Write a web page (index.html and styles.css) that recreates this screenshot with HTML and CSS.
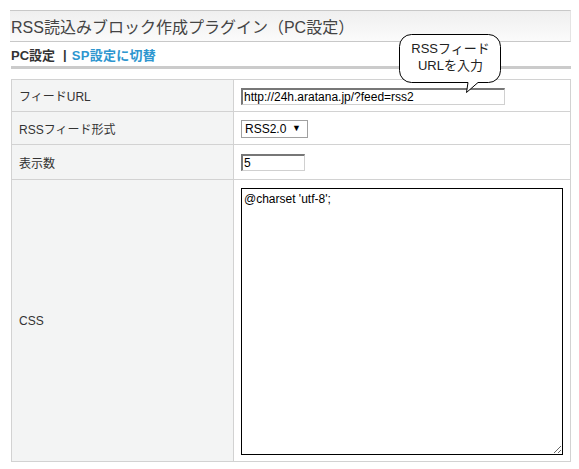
FILE: index.html
```html
<!DOCTYPE html>
<html lang="ja">
<head>
<meta charset="utf-8">
<title>RSS読込みブロック作成プラグイン</title>
<link rel="stylesheet" href="styles.css">
</head>
<body>
<div class="page">
  <div class="header"><h1 class="title">RSS読込みブロック作成プラグイン（PC設定）</h1></div>
  <div class="tabs"><span class="tab-current">PC設定</span><span class="sep">|</span><a class="tab-link" href="#">SP設定に切替</a></div>
  <div class="rule"></div>
  <table class="form">
    <tr class="row-url">
      <th>フィードURL</th>
      <td><input class="text url" type="text" value="http://24h.aratana.jp/?feed=rss2"></td>
    </tr>
    <tr class="row-type">
      <th>RSSフィード形式</th>
      <td><span class="select-wrap"><select class="select"><option>RSS2.0</option></select></span></td>
    </tr>
    <tr class="row-num">
      <th>表示数</th>
      <td><input class="text num" type="text" value="5"></td>
    </tr>
    <tr class="row-css">
      <th>CSS</th>
      <td><textarea class="css">@charset 'utf-8';</textarea></td>
    </tr>
  </table>
  <div class="bubble">
    <svg class="bubble-shape" width="110" height="64" viewBox="0 0 110 64">
      <path d="M13.5 0.5 H90.5 A12 12 0 0 1 102.5 12.5 V36.5 A12 12 0 0 1 90.5 48.5 H80 L68.5 58.5 L70 48.5 H13.5 A12 12 0 0 1 1.5 36.5 V12.5 A12 12 0 0 1 13.5 0.5 Z" fill="#fff" stroke="#000" stroke-width="1"/>
    </svg>
    <div class="bubble-text">RSSフィード<br>URLを入力</div>
  </div>
</div>
</body>
</html>
```
FILE: styles.css
```css
html, body {
  margin: 0;
  padding: 0;
  background: #fff;
}
body {
  font-family: "Liberation Sans", "Noto Sans CJK JP", sans-serif;
  color: #333;
}
.page {
  position: relative;
  width: 561px;
  padding: 10px 0 0 10px;
}
.header {
  height: 30px;
  border-top: 1px solid #c8c8c8;
  border-bottom: 1px solid #c8c8c8;
  border-right: 1px solid #e4e4e4;
  background: linear-gradient(#efefef, #fbfbfb);
  display: flex;
  align-items: center;
}
.title {
  margin: 0 0 0 1px;
  font-size: 16px;
  font-weight: normal;
  letter-spacing: 0;
  color: #444;
}
.tabs {
  height: 24px;
  display: flex;
  align-items: center;
  padding-left: 1px;
  font-size: 13px;
  font-weight: bold;
}
.tab-current { color: #333; }
.sep { margin: 0 5px 0 8px; color: #333; }
.tab-link { color: #2d96cf; text-decoration: none; letter-spacing: 0.3px; }
.rule {
  height: 3px;
  margin-left: 1px;
  background: #cbcbcb;
}
.form {
  margin: 10px 0 0 1px;
  width: 560px;
  border-collapse: collapse;
  font-size: 12px;
}
.form th, .form td {
  border: 1px solid #d2d2d2;
  padding: 0;
}
.form th {
  width: 214px;
  background: #f3f4f4;
  text-align: left;
  font-weight: normal;
  padding-left: 7px;
  color: #333;
}
.form td {
  background: #fff;
  padding-left: 7px;
}
.row-url { height: 32px; }
.row-type { height: 33px; }
.row-num { height: 35px; }
.row-css { height: 282px; }
.text {
  box-sizing: border-box;
  height: 17px;
  border: 1px solid #d0d0d0;
  border-top: 2px solid #777;
  border-left: 2px solid #777;
  font-family: "Liberation Sans", sans-serif;
  font-size: 12px;
  color: #000;
  padding: 0 1px;
  display: block;
}
.url { width: 264px; margin-top: 1px; }
.num { width: 64px; }
.select-wrap {
  position: relative;
  display: block;
  width: 67px;
  margin-top: 1px;
}
.select {
  box-sizing: border-box;
  appearance: none;
  -webkit-appearance: none;
  width: 67px;
  height: 18px;
  border: 1px solid #a0a0a0;
  border-radius: 0;
  background: #fff;
  font-family: "Liberation Sans", sans-serif;
  font-size: 12px;
  color: #000;
  padding: 0 0 0 3px;
}
.select-wrap::after {
  content: "▼";
  position: absolute;
  right: 7px;
  top: 3px;
  font-size: 9px;
  color: #000;
  pointer-events: none;
}
.css {
  box-sizing: border-box;
  display: block;
  width: 322px;
  height: 267px;
  margin-top: 2px;
  border: 1px solid #000;
  font-family: "Liberation Sans", sans-serif;
  font-size: 12px;
  color: #000;
  padding: 3px 2px;
  resize: both;
}
.bubble {
  position: absolute;
  left: 398px;
  top: 34px;
  width: 110px;
  height: 64px;
}
.bubble-shape {
  position: absolute;
  left: 0;
  top: 0;
}
.bubble-text {
  position: absolute;
  left: 2px;
  top: 6px;
  width: 101px;
  text-align: center;
  font-size: 13px;
  line-height: 17px;
  color: #222;
}
```
